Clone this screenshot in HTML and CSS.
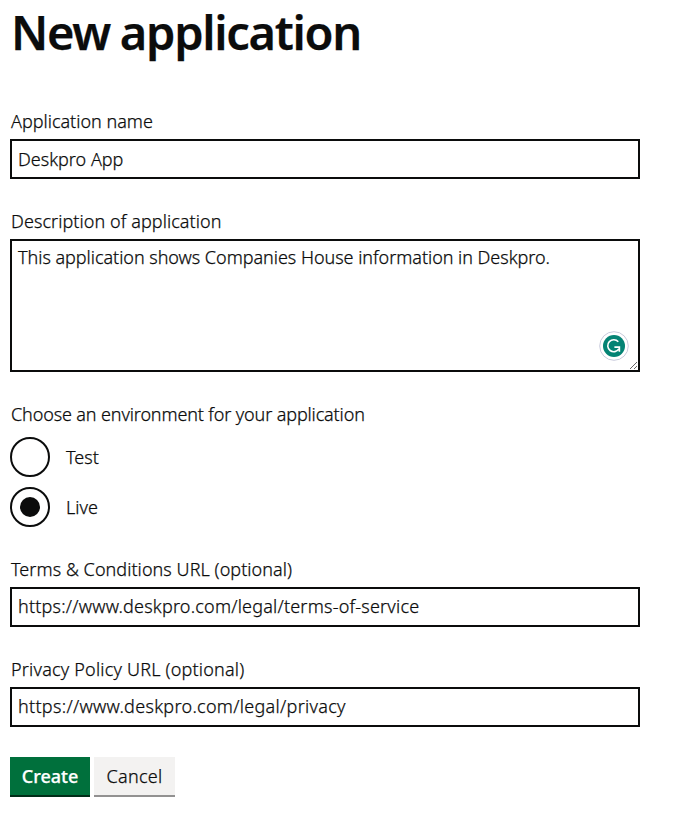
FILE: index.html
```html
<!DOCTYPE html>
<html lang="en">
<head>
<meta charset="utf-8">
<title>New application</title>
<link rel="stylesheet" href="styles.css">
</head>
<body>
<main class="page">
  <h1 class="heading">New application</h1>
  <form class="form">
    <div class="group">
      <label class="label label-name" for="name"><span>Application name</span></label>
      <input class="input value-name" id="name" type="text" value="Deskpro App">
    </div>
    <div class="group">
      <label class="label label-description" for="description"><span>Description of application</span></label>
      <div class="textarea-wrap">
        <textarea class="input textarea" id="description" spellcheck="false">This application shows Companies House information in Deskpro.</textarea>
        <svg class="assistant" width="30" height="30" viewBox="0 0 30 30" aria-hidden="true">
          <circle cx="15" cy="15" r="14.3" fill="#fff" stroke="#c9cbdc"/>
          <circle cx="15" cy="15" r="11" fill="#048374"/>
          <path d="M19.3 10.8A6 6 0 1 0 19.9 17.8M15.4 16.1H20.4V20.8" fill="none" stroke="#fff" stroke-width="1.6"/>
        </svg>
      </div>
    </div>
    <fieldset class="group fieldset">
      <legend class="label label-environment"><span>Choose an environment for your application</span></legend>
      <div class="radios">
        <label class="radio"><input class="radio-input" type="radio" name="env"><span class="radio-text radio-test">Test</span></label>
        <label class="radio"><input class="radio-input" type="radio" name="env" checked><span class="radio-text radio-live">Live</span></label>
      </div>
    </fieldset>
    <div class="group">
      <label class="label label-terms" for="terms"><span>Terms &amp; Conditions URL (optional)</span></label>
      <input class="input value-terms" id="terms" type="text" value="https://www.deskpro.com/legal/terms-of-service">
    </div>
    <div class="group">
      <label class="label label-privacy" for="privacy"><span>Privacy Policy URL (optional)</span></label>
      <input class="input value-privacy" id="privacy" type="text" value="https://www.deskpro.com/legal/privacy">
    </div>
    <div class="actions">
      <button class="button button-primary" type="button">Create</button>
      <button class="button button-secondary" type="button">Cancel</button>
    </div>
  </form>
</main>
</body>
</html>
```
FILE: styles.css
```css
* { box-sizing: border-box; }
body {
  margin: 0;
  background: #fff;
  color: #0b0c0c;
  font: 300 18px/25px "Noto Sans", "Open Sans", sans-serif;
  -webkit-text-stroke: 0.25px currentColor;
}
.page { width: 650px; padding: 7px 10px 0; }
.heading {
  margin: 0 0 52px;
  padding-left: 1px;
  font-size: 47px;
  line-height: 50px;
  font-weight: 600;
  letter-spacing: -1.3px;
  word-spacing: -1px;
}
.group { margin: 0 0 30px; }
.label { display: block; margin-bottom: 5px; padding: 0 0 0 1px; }
.label-description { letter-spacing: 0.08px; }
.label-terms { letter-spacing: 0.06px; }
.label-privacy { letter-spacing: 0.2px; }
.input {
  display: block;
  width: 100%;
  height: 40px;
  margin: 0;
  padding: 5px 6px;
  border: 2px solid #0b0c0c;
  border-radius: 0;
  background: #fff;
  color: #0b0c0c;
  font: inherit;
  -webkit-text-stroke: inherit;
}
.value-terms, .value-privacy { padding-bottom: 7px; }
.value-terms { letter-spacing: 0.21px; }
.value-privacy { letter-spacing: 0.3px; }
.textarea-wrap { position: relative; }
.textarea { height: 133px; padding-top: 4px; resize: vertical; letter-spacing: -0.03px; }
.assistant { position: absolute; right: 11px; bottom: 11px; }
.fieldset { border: 0; padding: 0; min-width: 0; }
.label-environment { margin-bottom: 10px; letter-spacing: -0.13px; }
.radios { display: grid; gap: 10px; }
.radio { display: flex; align-items: center; gap: 16px; height: 40px; }
.radio-input {
  appearance: none;
  display: grid;
  place-items: center;
  width: 40px;
  height: 40px;
  margin: 0;
  border: 2px solid #0b0c0c;
  border-radius: 50%;
}
.radio-input:checked::before {
  content: "";
  width: 20px;
  height: 20px;
  border-radius: 50%;
  background: #0b0c0c;
}
.actions { display: flex; gap: 4px; }
.button {
  height: 40px;
  padding: 0 0 2px;
  border: 0;
  font: inherit;
  -webkit-text-stroke: inherit;
}
.button-primary { width: 80px; background: #00703c; color: #fff; font-weight: 500; box-shadow: inset 0 -2px #002d18; }
.button-secondary { width: 81px; background: #f3f2f1; color: #0b0c0c; letter-spacing: 0.3px; box-shadow: inset 0 -2px #929191; }
```
